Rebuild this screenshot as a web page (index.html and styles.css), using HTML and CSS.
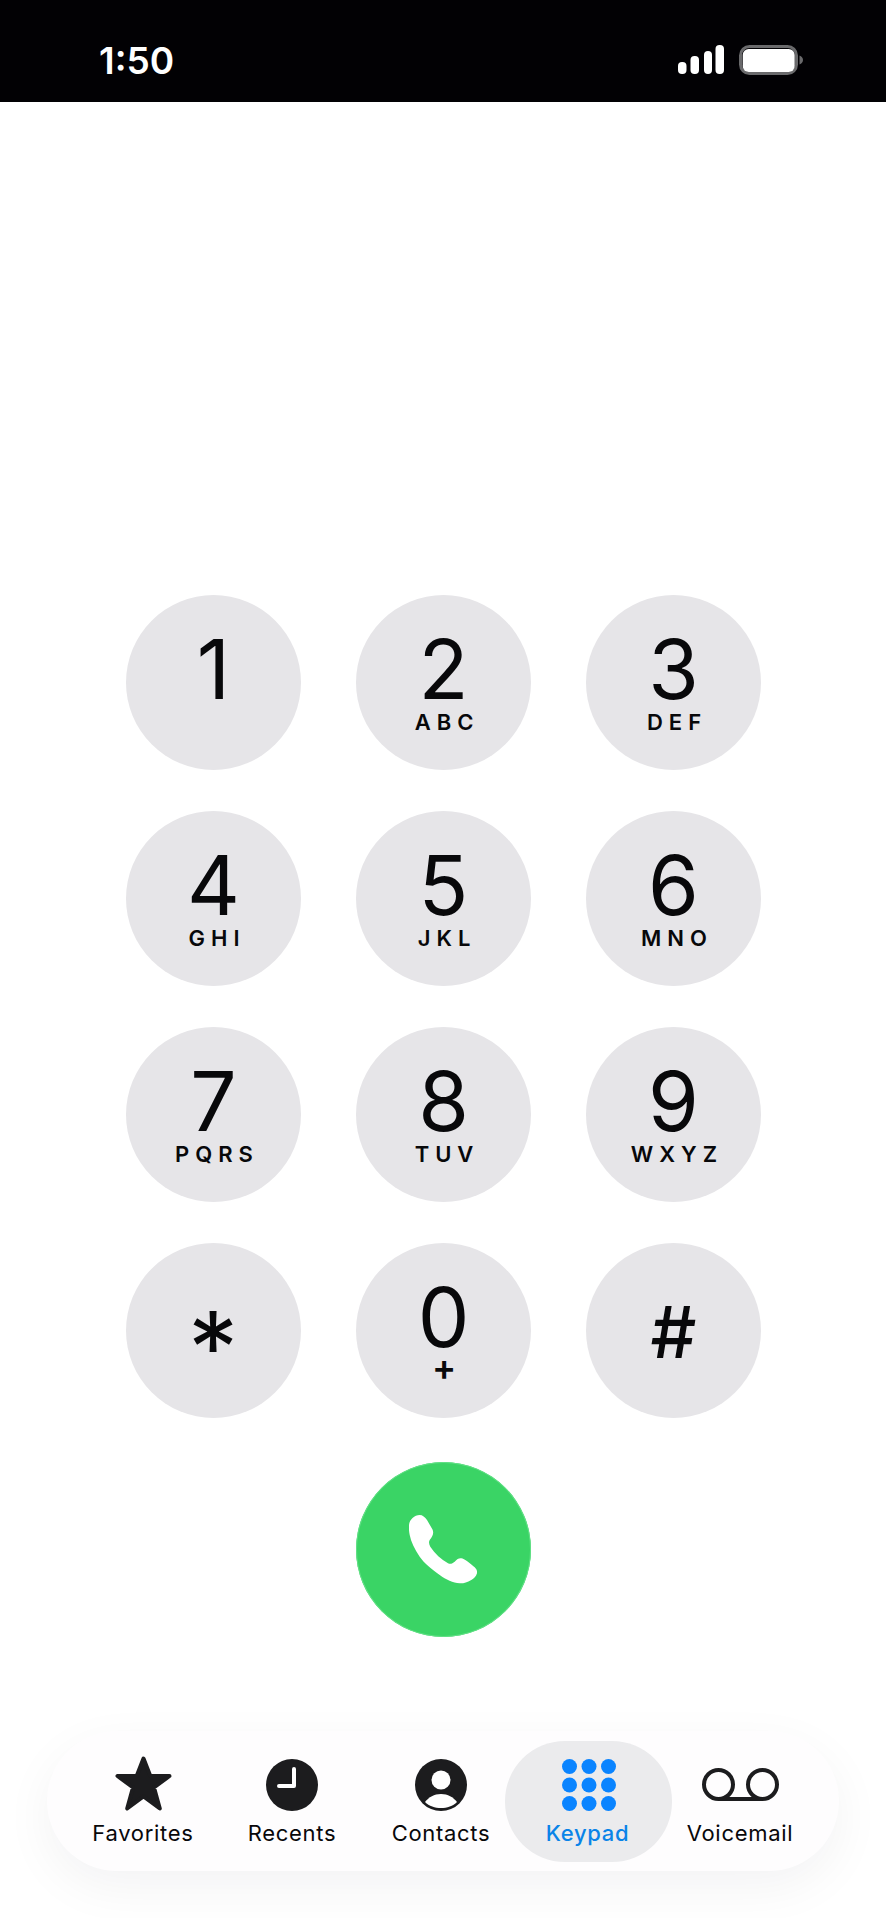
FILE: index.html
```html
<!DOCTYPE html>
<html lang="en">
<head>
    <meta charset="UTF-8">
    <meta name="viewport" content="width=device-width, initial-scale=1.0">
    <title>Keypad</title>
    <link rel="stylesheet" href="styles.css">
</head>
<body>
    <div class="status-bar">
        <span class="time">1:50</span>
        <div class="status-icons">
            <svg width="46" height="29" viewBox="0 0 46 29">
                <rect x="0" y="17" width="8.500" height="12" rx="4" fill="#fff"/>
                <rect x="12.500" y="11" width="8.500" height="18" rx="4" fill="#fff"/>
                <rect x="26" y="6" width="8" height="23" rx="4" fill="#fff"/>
                <rect x="37.500" y="0" width="8.500" height="29" rx="4" fill="#fff"/>
            </svg>
            <svg width="64" height="30" viewBox="0 0 64 30">
                <rect x="1.500" y="1.500" width="56" height="27" rx="9" fill="none" stroke="#6a6a6c" stroke-width="3"/>
                <rect x="3.700" y="4" width="52" height="23" rx="6" fill="#fff"/>
                <path d="M60.500 10.500c2 .6 3.500 2.500 3.500 4.500s-1.500 3.900-3.500 4.500z" fill="#6a6a6c"/>
            </svg>
        </div>
    </div>

    <div class="keypad">
        <button class="key"><span class="digit">1</span></button>
        <button class="key"><span class="digit">2</span><span class="letters">ABC</span></button>
        <button class="key"><span class="digit">3</span><span class="letters">DEF</span></button>
        <button class="key"><span class="digit">4</span><span class="letters">GHI</span></button>
        <button class="key"><span class="digit">5</span><span class="letters">JKL</span></button>
        <button class="key"><span class="digit">6</span><span class="letters">MNO</span></button>
        <button class="key"><span class="digit">7</span><span class="letters">PQRS</span></button>
        <button class="key"><span class="digit">8</span><span class="letters">TUV</span></button>
        <button class="key"><span class="digit">9</span><span class="letters">WXYZ</span></button>
        <button class="key key-symbol"><span class="star-sign">*</span></button>
        <button class="key"><span class="digit">0</span><span class="plus">+</span></button>
        <button class="key key-symbol"><span class="hash-sign">#</span></button>
        <button class="call-btn">
            <svg width="68" height="69" viewBox="0 0 68 69">
                <path fill="#fff" d="M10.700 0C13.500 0 16 2 18 5L23.500 14.500C25 18 24 21 20.700 25C19.500 27 20 29.500 21.300 31.700C26 39 32 44 39 48.300C41.500 49.500 43.500 48.500 45.700 46.700C48 44 50 43 52.300 43.300C55 43.500 62 49 65.700 52.300C67.500 54 68.500 56.500 68 58.300C67 61.500 65 63.500 62.300 65C58 67.500 54.500 68.500 50.700 68.300C44 68 37 64.500 30.700 60C22.500 54 15 48 10.700 41.700C5.500 34 2 27 .7 20C-.3 15 -.2 12 0 10C.5 4.500 5.500 0 10.700 0Z"/>
            </svg>
        </button>
    </div>

    <nav class="tab-bar">
        <div class="tab">
            <svg class="tab-icon tab-icon-star" width="57" height="55" viewBox="0 0 57 55">
                <path fill="#1c1c1e" stroke="#1c1c1e" stroke-width="4" stroke-linejoin="round" d="M28.500 2.500L35.300 20H54.500L39 31.500L44.800 52.500L28.500 40.500L12.200 52.500L18 31.500L2.500 20H21.700Z"/>
            </svg>
            <span class="tab-label">Favorites</span>
        </div>
        <div class="tab">
            <svg class="tab-icon" width="52" height="52" viewBox="0 0 52 52">
                <circle cx="26" cy="26" r="26" fill="#1c1c1e"/>
                <path d="M28 10V27H13" fill="none" stroke="#fff" stroke-width="4" stroke-linecap="round" stroke-linejoin="round"/>
            </svg>
            <span class="tab-label">Recents</span>
        </div>
        <div class="tab">
            <svg class="tab-icon" width="52" height="52" viewBox="0 0 52 52">
                <circle cx="26" cy="26" r="26" fill="#1c1c1e"/>
                <circle cx="26" cy="21" r="9.500" fill="#fff"/>
                <path d="M10 43C14 38 19 35 26 35S38 38 42 43C38 47 32 49 26 49S14 47 10 43Z" fill="#fff"/>
            </svg>
            <span class="tab-label">Contacts</span>
        </div>
        <div class="tab tab-active">
            <svg class="tab-icon" width="54" height="52" viewBox="0 0 54 52" fill="#0a84ff">
                <circle cx="7.500" cy="7.500" r="7.500"/><circle cx="27" cy="7.500" r="7.500"/><circle cx="46.500" cy="7.500" r="7.500"/>
                <circle cx="7.500" cy="26" r="7.500"/><circle cx="27" cy="26" r="7.500"/><circle cx="46.500" cy="26" r="7.500"/>
                <circle cx="7.500" cy="44.500" r="7.500"/><circle cx="27" cy="44.500" r="7.500"/><circle cx="46.500" cy="44.500" r="7.500"/>
            </svg>
            <span class="tab-label">Keypad</span>
        </div>
        <div class="tab">
            <svg class="tab-icon" width="77" height="52" viewBox="0 0 77 52">
                <g fill="none" stroke="#1c1c1e" stroke-width="4">
                    <circle cx="16.500" cy="25.500" r="14.500"/>
                    <circle cx="60.500" cy="25.500" r="14.500"/>
                    <path d="M16.500 40H60.500"/>
                </g>
            </svg>
            <span class="tab-label">Voicemail</span>
        </div>
    </nav>
</body>
</html>
```

FILE: styles.css
```css
body {
    font-family: Inter, "Liberation Sans", sans-serif;
    margin: 0;
    padding: 0;
    height: 1918px;
    overflow: hidden;
    background-color: #fff;
    color: #08080a;
}
.status-bar {
    height: 102px;
    background-color: #020104;
    color: #fff;
    display: flex;
    justify-content: space-between;
    align-items: flex-start;
    padding: 0 83px 0 99px;
    box-sizing: border-box;
}
.time {
    font-size: 37px;
    font-weight: 600;
    line-height: 36px;
    margin-top: 43px;
}
.status-icons {
    display: flex;
    gap: 15px;
    align-items: flex-start;
    margin-top: 45px;
}
.keypad {
    display: grid;
    grid-template-columns: repeat(3, 175px);
    grid-auto-rows: 175px;
    column-gap: 55px;
    row-gap: 41px;
    justify-content: center;
    margin-top: 493px;
}
.key {
    width: 175px;
    height: 175px;
    border: none;
    border-radius: 50%;
    padding: 0;
    background-color: #e6e5e8;
    color: inherit;
    font-family: inherit;
    display: flex;
    flex-direction: column;
    align-items: center;
    justify-content: flex-start;
}
.key-symbol {
    justify-content: center;
}
.digit {
    font-size: 82px;
    font-weight: 400;
    line-height: 60px;
    margin-top: 45px;
    margin-left: 1px;
}
.letters {
    font-size: 22px;
    font-weight: 600;
    line-height: 26px;
    letter-spacing: 6px;
    margin-top: 9px;
    margin-left: 2px;
    margin-right: -6px;
}
.plus {
    font-size: 36px;
    font-weight: 600;
    line-height: 30px;
    margin-top: 4px;
    margin-left: 2px;
}
.star-sign {
    font-size: 100px;
    line-height: 60px;
    margin-top: 34px;
}
.hash-sign {
    font-size: 72px;
    font-weight: 500;
    line-height: 60px;
    margin-top: 2px;
    margin-left: 1px;
}
.call-btn {
    grid-column: 2;
    width: 175px;
    height: 175px;
    margin-top: 3px;
    border: none;
    border-radius: 50%;
    padding: 0;
    background-color: #3ad465;
    box-shadow: inset 0 0 0 1px #62e086;
    display: flex;
    align-items: center;
    justify-content: center;
}
.tab-bar {
    display: flex;
    height: 140px;
    margin: 97px 47px 0;
    padding: 10px 0 9px 32px;
    box-sizing: border-box;
    border-radius: 70px;
    background-color: #fefdfe;
    box-shadow: 0 16px 50px rgba(20, 20, 40, 0.05);
}
.tab {
    width: 128px;
    height: 121px;
    display: flex;
    flex-direction: column;
    align-items: center;
}
.tab + .tab {
    margin-left: 21px;
}
.tab-active,
.tab + .tab-active {
    width: 167px;
    margin-left: 0;
    border-radius: 60px;
    background-color: #ebebed;
    color: #0a84e8;
}
.tab-active + .tab {
    width: 136px;
    margin-left: 0;
}
.tab-icon {
    margin-top: 18px;
}
.tab-icon-star {
    margin-top: 15px;
}
.tab-label {
    font-size: 22px;
    font-weight: 400;
    line-height: 26px;
    letter-spacing: 0.7px;
    margin-top: 9px;
    white-space: nowrap;
}
.tab-active .tab-label {
    font-weight: 500;
    margin-right: 2px;
}
```
